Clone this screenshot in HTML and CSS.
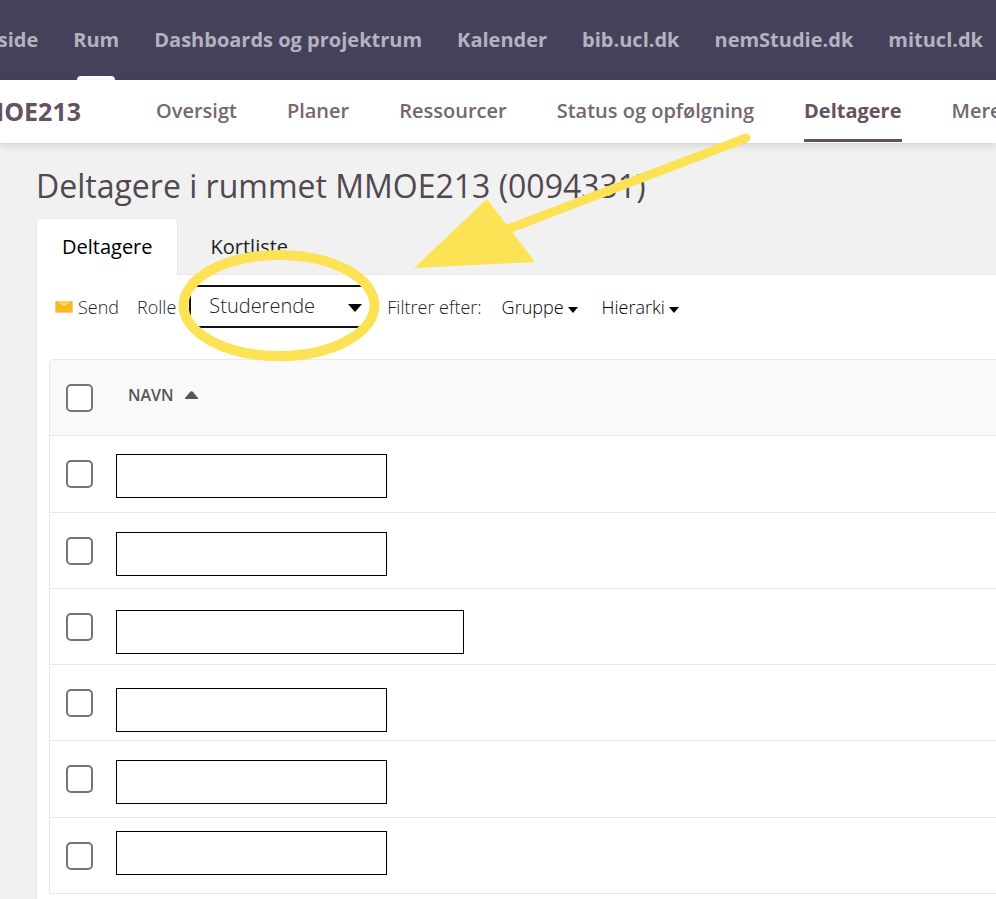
FILE: index.html
```html
<!DOCTYPE html>
<html lang="da">
<head>
<meta charset="utf-8">
<meta name="viewport" content="width=device-width, initial-scale=1">
<title>Deltagere</title>
<link rel="stylesheet" href="styles.css">
</head>
<body>
<nav class="topnav">
  <a href="#">Forside</a>
  <a href="#" class="current">Rum</a>
  <a href="#">Dashboards og projektrum</a>
  <a href="#">Kalender</a>
  <a href="#">bib.ucl.dk</a>
  <a href="#">nemStudie.dk</a>
  <a href="#">mitucl.dk</a>
</nav>
<header class="roombar">
  <div class="room"><span>MMOE213</span></div>
  <nav class="roomnav">
    <a href="#">Oversigt</a>
    <a href="#">Planer</a>
    <a href="#">Ressourcer</a>
    <a href="#">Status og opfølgning</a>
    <a href="#" class="current">Deltagere</a>
    <a href="#">Mere</a>
  </nav>
</header>
<main class="content">
  <h1>Deltagere i rummet MMOE213 (0094331)</h1>
  <div class="tabs">
    <a href="#" class="tab active">Deltagere</a>
    <a href="#" class="tab">Kortliste</a>
  </div>
  <section class="panel">
    <div class="toolbar">
      <button type="button" class="send">
        <svg width="18" height="12" viewBox="0 0 18 12" aria-hidden="true">
          <rect width="18" height="12" rx="1" fill="#f3cd80"/>
          <rect x="1" y="1" width="16" height="10" fill="#fbbd1c"/>
          <path d="M1 1h16L9 7z" fill="#ffd040"/>
          <path d="M1 1l8 6 8-6" fill="none" stroke="#dfa23a"/>
        </svg>
        Send
      </button>
      <label class="role" for="role">Rolle</label>
      <span class="select">
        <select id="role"><option>Studerende</option></select>
        <svg width="14" height="8" viewBox="0 0 14 8" aria-hidden="true"><path d="M0 0h14L7 8z"/></svg>
      </span>
      <span class="filter">Filtrer efter:</span>
      <button type="button" class="menu">Gruppe<svg width="10" height="6" viewBox="0 0 10 6" aria-hidden="true"><path d="M0 0h10L5 6z"/></svg></button>
      <button type="button" class="menu">Hierarki<svg width="10" height="6" viewBox="0 0 10 6" aria-hidden="true"><path d="M0 0h10L5 6z"/></svg></button>
    </div>
    <div class="list">
      <table>
        <thead>
          <tr><th class="pick"><input type="checkbox" aria-label="Vælg alle"></th><th class="name">NAVN<svg width="13" height="8" viewBox="0 0 13 8" aria-hidden="true"><path d="M0 8V7l5-6q1.500-1.500 3 0l5 6v1z" fill="#555"/></svg></th></tr>
        </thead>
        <tbody>
          <tr><td class="pick"><input type="checkbox" aria-label="Vælg deltager 1"></td><td></td></tr>
          <tr><td class="pick"><input type="checkbox" aria-label="Vælg deltager 2"></td><td></td></tr>
          <tr><td class="pick"><input type="checkbox" aria-label="Vælg deltager 3"></td><td></td></tr>
          <tr><td class="pick"><input type="checkbox" aria-label="Vælg deltager 4"></td><td></td></tr>
          <tr><td class="pick"><input type="checkbox" aria-label="Vælg deltager 5"></td><td></td></tr>
          <tr><td class="pick"><input type="checkbox" aria-label="Vælg deltager 6"></td><td></td></tr>
        </tbody>
      </table>
    </div>
  </section>
</main>
<svg class="markup" width="780" height="890" viewBox="0 0 780 890" aria-hidden="true">
  <g fill="#fff" stroke="#000">
    <rect x="116.500" y="454.500" width="270" height="43"/>
    <rect x="116.500" y="532.500" width="270" height="43"/>
    <rect x="116.500" y="610.500" width="347" height="43"/>
    <rect x="116.500" y="688.500" width="270" height="43"/>
    <rect x="116.500" y="760.500" width="270" height="43"/>
    <rect x="116.500" y="831.500" width="270" height="43"/>
  </g>
  <ellipse cx="279" cy="305.500" rx="95.500" ry="50.500" fill="none" stroke="#fce356" stroke-width="10"/>
  <path d="M746 138L508 229" stroke="#fce356" stroke-width="9" stroke-linecap="round"/>
  <path d="M414 268L487 199L535 262z" fill="#fce356"/>
</svg>
</body>
</html>
```

FILE: styles.css
```css
* { box-sizing: border-box; }

body {
  margin: 0;
  min-height: 100vh;
  position: relative;
  overflow: hidden;
  display: flex;
  flex-direction: column;
  background: #f1f1f1;
  color: #222;
  font-family: "Open Sans", sans-serif;
  font-size: 18px;
}

a { color: inherit; text-decoration: none; }

button {
  border: 0;
  padding: 0;
  background: none;
  color: inherit;
  font: inherit;
}

.topnav {
  display: flex;
  justify-content: flex-end;
  gap: 35px;
  height: 80px;
  padding-right: 13px;
  overflow: hidden;
  background: #46415a;
  color: #b5b2bf;
  font-size: 20px;
  font-weight: 700;
  line-height: 80px;
  white-space: nowrap;
}

.topnav .current {
  display: flex;
  flex-direction: column;
  align-items: center;
}

.topnav .current::after {
  content: "";
  width: 38px;
  height: 4px;
  margin-top: -4px;
  border-radius: 4px 4px 0 0;
  background: #fff;
}

.roombar {
  display: flex;
  gap: 75px;
  height: 63px;
  overflow: hidden;
  background: #fff;
  line-height: 62px;
  white-space: nowrap;
  color: #756772;
  box-shadow: 0 2px 8px rgba(0, 0, 0, 0.15);
  flex: none;
  position: relative;
}

.room {
  display: flex;
  justify-content: flex-end;
  flex: none;
  width: 81px;
  overflow: hidden;
  color: #65525f;
  font-size: 25px;
  font-weight: 700;
}

.roomnav {
  display: flex;
  gap: 50px;
  font-size: 20px;
  font-weight: 600;
}

.roomnav .current {
  height: 62px;
  border-bottom: 3px solid #65525f;
  color: #65525f;
  font-weight: 700;
}

.content {
  flex: 1;
  display: flex;
  flex-direction: column;
  padding: 20px 0 0 36px;
}

h1 {
  margin: 0;
  color: #514851;
  font-size: 32px;
  font-weight: 400;
  line-height: 46px;
}

.tabs {
  display: flex;
  height: 65px;
  padding-top: 9px;
  font-size: 20px;
  line-height: 56px;
}

.tab {
  padding: 0 33px;
  border-top: 1px solid transparent;
}

.tab.active {
  margin-bottom: -1px;
  padding: 0 24px 0 25px;
  border: 1px solid #e8e8e8;
  border-bottom: 0;
  border-radius: 5px 5px 0 0;
  background: #fff;
  color: #000;
  position: relative;
}

.panel {
  flex: 1;
  padding: 10px 0 0 12px;
  border: solid #e8e8e8;
  border-width: 1px 0 0 1px;
  background: #fff;
}

.toolbar {
  display: flex;
  align-items: center;
  height: 44px;
  margin: 0 0 30px 6px;
  font-weight: 300;
  white-space: nowrap;
}

.send {
  display: flex;
  align-items: center;
  gap: 5px;
}

.role { margin: 0 13px 0 18px; }

.select {
  display: flex;
  align-items: center;
  align-self: flex-start;
  width: 184px;
  height: 43px;
  margin-right: 14px;
}

.select select {
  flex: 1;
  height: 43px;
  padding: 0 18px 3px;
  border: 2px solid #111;
  border-radius: 5px;
  appearance: none;
  background: #fff;
  color: #222;
  font: inherit;
  font-size: 20px;
}

.select svg {
  margin: 2px 11px 0 -25px;
}

.filter { margin-right: 20px; }

.menu {
  display: flex;
  align-items: center;
  gap: 4px;
  margin-right: 24px;
  color: #000;
}

.menu svg { margin-top: 5px; }

.list {
  border: solid #e8e8e8;
  border-width: 1px 0 0 1px;
  border-radius: 5px 0 0 0;
  overflow: hidden;
}

table {
  width: 100%;
  border-collapse: collapse;
}

th,
td {
  height: 76px;
  padding: 0;
  border-bottom: 1px solid #e8e8e8;
  vertical-align: middle;
  text-align: left;
}

tbody tr:nth-child(4n + 1) td { height: 77px; }

th {
  height: 75px;
  background: #f9f9f9;
}

.pick {
  width: 78px;
  padding: 1px 0 0 16px;
}

.name {
  padding-bottom: 4px;
  color: #555;
  font-size: 16px;
  font-weight: 600;
}

.name svg { margin-left: 11px; vertical-align: 2px; }

input[type="checkbox"] {
  appearance: none;
  display: block;
  width: 27px;
  height: 28px;
  margin: 0;
  border: 2px solid #757575;
  border-radius: 5px;
  background: #fff;
}

.markup {
  position: absolute;
  top: 0;
  left: 0;
  pointer-events: none;
}
```
